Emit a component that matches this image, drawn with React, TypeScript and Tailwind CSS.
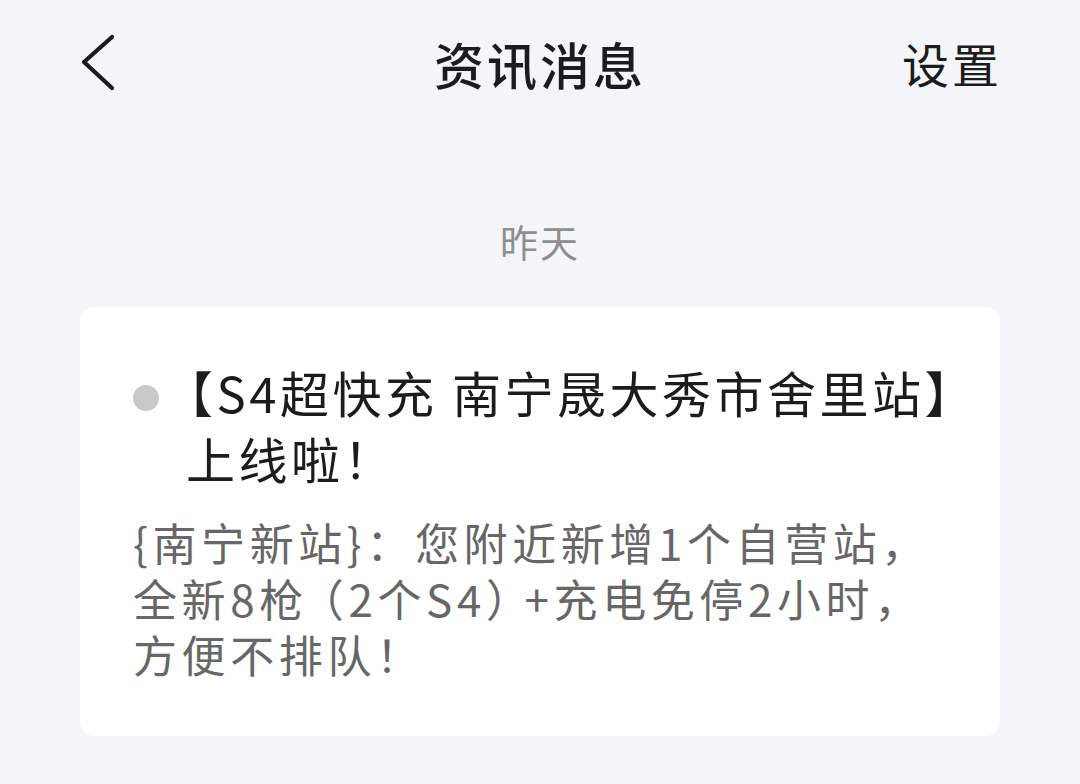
const FONT = "font-['Noto_Sans_CJK_SC','Noto_Sans',sans-serif]";

const BackIcon = () => (
  <svg width="40" height="60" viewBox="0 0 40 60" fill="none">
    <path
      d="M34 4 L6 29 L34 55"
      stroke="#1c1c1c"
      strokeWidth="4.2"
      strokeLinecap="round"
      strokeLinejoin="round"
    />
  </svg>
);

const App = () => {
  return (
    <div className={`w-[1080px] h-[784px] bg-[#f4f5f9] ${FONT} overflow-hidden`}>
      {/* header */}
      <div className="grid grid-cols-[1fr_auto_1fr] items-center h-[126px] pl-[78px] pr-[78px]">
        <div className="flex items-center">
          <BackIcon />
        </div>
        <div className="text-[50px] leading-[60px] tracking-[3px] font-medium text-[#1c1c1c]">
          资讯消息
        </div>
        <div className="flex justify-end text-[47px] leading-[60px] tracking-[3px] text-[#1c1c1c]">
          设置
        </div>
      </div>

      {/* date */}
      <div className="mt-[92px] text-center text-[38px] leading-[46px] tracking-[2px] text-[#8e8e8e]">
        昨天
      </div>

      {/* card */}
      <div className="mx-[80px] mt-[43px] bg-white rounded-[14px] pl-[53px] pr-[30px] pt-[52px] pb-[54px]">
        <div className="flex items-start">
          <div className="w-[26px] h-[26px] rounded-full bg-[#c9c9c9] mt-[26px] shrink-0" />
          <div className="ml-[27px] text-[49px] leading-[66px] tracking-[3.5px] text-[#1c1c1c]">
            <div className="whitespace-nowrap">
              <span className="ml-[-22px]">【</span>S4超快充 南宁晟大秀市舍里站】
            </div>
            <div className="whitespace-nowrap">上线啦！</div>
          </div>
        </div>
        <div className="mt-[23px] text-[44px] leading-[56px] tracking-[4.6px] text-[#676767]">
          <div className="whitespace-nowrap">{"{南宁新站}：您附近新增1个自营站，"}</div>
          <div className="whitespace-nowrap">
            全新8枪<span className="ml-[14px] [font-feature-settings:'halt']">（</span>2个S4
            <span className="mr-[12px] [font-feature-settings:'halt']">）</span>+充电免停2小时，
          </div>
          <div className="whitespace-nowrap">方便不排队！</div>
        </div>
      </div>
    </div>
  );
};

export default App;
